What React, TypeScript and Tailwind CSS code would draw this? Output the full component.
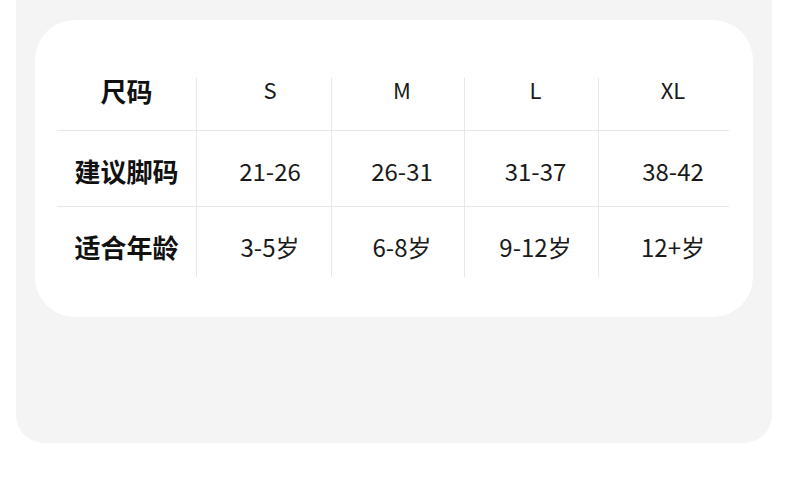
import React from "react";

const cols = ["S", "M", "L", "XL"];
const rows = [
  { label: "建议脚码", values: ["21-26", "26-31", "31-37", "38-42"], h: "h-[76px] pt-[28px]" },
  { label: "适合年龄", values: ["3-5岁", "6-8岁", "9-12岁", "12+岁"], h: "h-[70px] pt-[28px]" },
];
// small nudges so the text sits where it does in the design
const shift = ["pl-3", "pl-[8px]", "pl-2", "pl-[18px]"];

export default function App() {
  return (
    <div className="w-[790px] h-[503px] bg-white font-['Noto_Sans_CJK_SC',sans-serif]">
      <div className="ml-4 w-[756px] h-[443px] bg-[#f4f4f4] rounded-b-[28px] pt-5 px-[19px]">
        <div className="w-[718px] h-[297px] bg-white rounded-[40px] pl-[22px] pt-[58px]">
          <div className="grid grid-cols-[139px_135px_133px_134px_131px] w-[672px]">
            {/* header */}
            <div className="h-[53px] border-b border-[#e8e8e8] text-center text-[26px] leading-[26px] font-bold text-[#111]">
              尺码
            </div>
            {cols.map((c, i) => (
              <div
                key={c}
                className={`h-[53px] border-b border-l border-[#e8e8e8] text-center text-[22px] leading-[22px] text-[#1a1a1a] ${shift[i]}`}
              >
                {c}
              </div>
            ))}

            {rows.map((r, ri) => (
              <React.Fragment key={r.label}>
                <div
                  className={`${r.h} ${ri === 0 ? "border-b border-[#e8e8e8]" : ""} text-center text-[26px] leading-[24px] font-bold text-[#111]`}
                >
                  {r.label}
                </div>
                {r.values.map((v, i) => (
                  <div
                    key={v}
                    className={`${r.h} ${ri === 0 ? "border-b" : ""} border-l border-[#e8e8e8] text-center text-[24px] leading-[24px] text-[#1a1a1a] ${shift[i]}`}
                  >
                    {v}
                  </div>
                ))}
              </React.Fragment>
            ))}
          </div>
        </div>
      </div>
    </div>
  );
}
